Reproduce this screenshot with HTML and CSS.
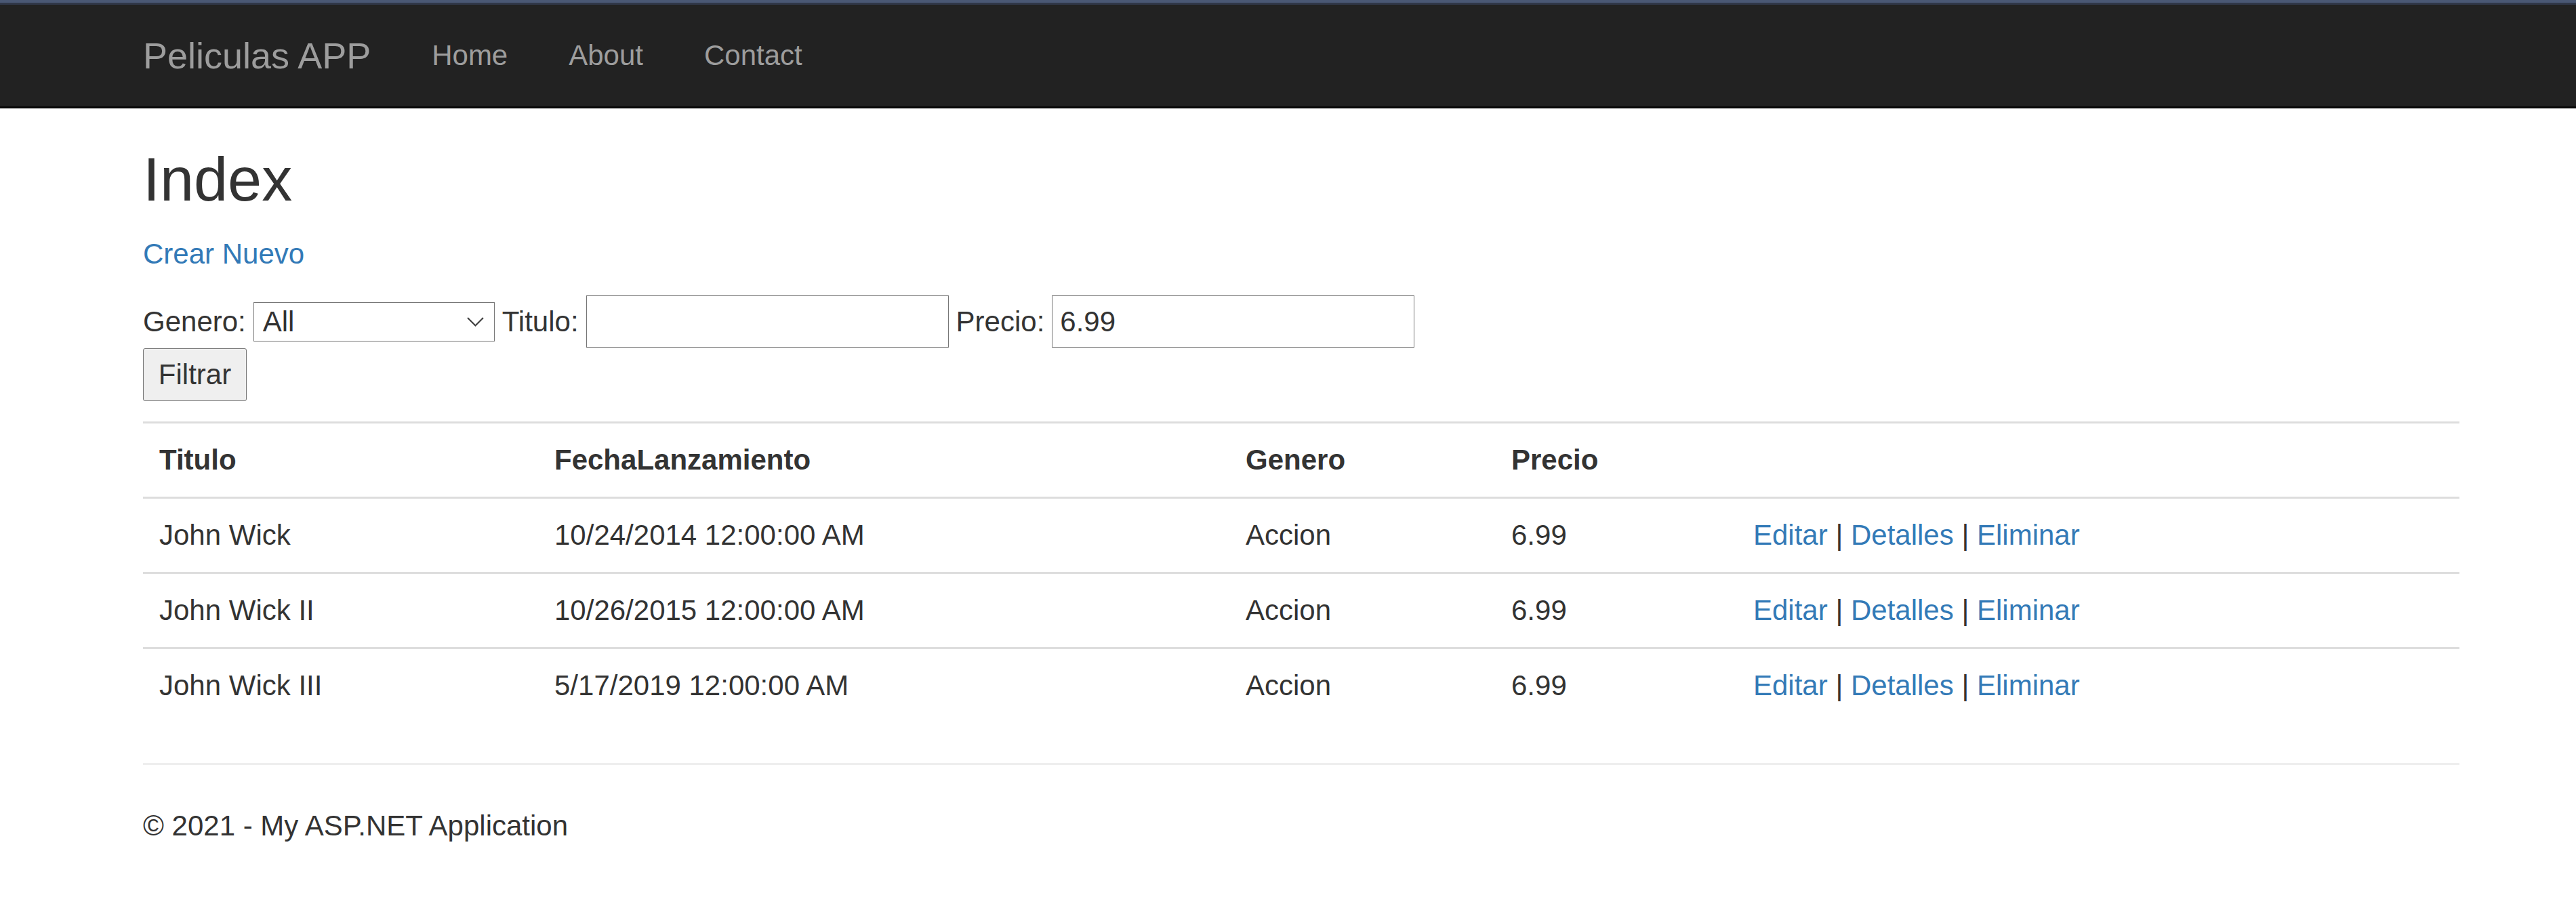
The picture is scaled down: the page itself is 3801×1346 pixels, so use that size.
FILE: index.html
```html
<!DOCTYPE html>
<html lang="es">
<head>
<meta charset="utf-8">
<title>Index - Peliculas APP</title>
<link rel="stylesheet" href="styles.css">
</head>
<body>
<div class="topstrip"></div>
<nav class="navbar">
  <div class="container navrow">
    <a class="brand" href="#">Peliculas APP</a>
    <ul class="navlinks">
      <li><a href="#">Home</a></li>
      <li><a href="#">About</a></li>
      <li><a href="#">Contact</a></li>
    </ul>
  </div>
</nav>
<main class="container body-content">
  <h2 class="title">Index</h2>
  <p class="create"><a href="#">Crear Nuevo</a></p>
  <form class="filter">
    <div class="filter-row">
      <label class="lbl">Genero:</label>
      <span class="select-wrap">
        <select class="select"><option>All</option></select>
        <svg class="chev" viewBox="0 0 25 14" width="25" height="14" aria-hidden="true"><path d="M1 1 L12.5 12.5 L24 1" fill="none" stroke="#3a3a3a" stroke-width="2"/></svg>
      </span>
      <label class="lbl">Titulo:</label>
      <input class="text" type="text" value="">
      <label class="lbl">Precio:</label>
      <input class="text" type="text" value="6.99">
    </div>
    <button class="btn" type="button">Filtrar</button>
  </form>
  <table class="table">
    <colgroup>
      <col class="c1"><col class="c2"><col class="c3"><col class="c4"><col class="c5">
    </colgroup>
    <tr><th>Titulo</th><th>FechaLanzamiento</th><th>Genero</th><th>Precio</th><th></th></tr>
    <tr><td>John Wick</td><td>10/24/2014 12:00:00 AM</td><td>Accion</td><td>6.99</td><td><a href="#">Editar</a> | <a href="#">Detalles</a> | <a href="#">Eliminar</a></td></tr>
    <tr><td>John Wick II</td><td>10/26/2015 12:00:00 AM</td><td>Accion</td><td>6.99</td><td><a href="#">Editar</a> | <a href="#">Detalles</a> | <a href="#">Eliminar</a></td></tr>
    <tr><td>John Wick III</td><td>5/17/2019 12:00:00 AM</td><td>Accion</td><td>6.99</td><td><a href="#">Editar</a> | <a href="#">Detalles</a> | <a href="#">Eliminar</a></td></tr>
  </table>
  <hr class="rule">
  <footer class="footer"><p>&copy; 2021 - My ASP.NET Application</p></footer>
</main>
</body>
</html>
```
FILE: styles.css
```css
* { box-sizing: border-box; }
html, body { margin: 0; padding: 0; background: #fff; }
body {
  font-family: "Liberation Sans", Arial, Helvetica, sans-serif;
  font-size: 42px;
  line-height: 60px;
  color: #333;
}
a { color: #337ab7; text-decoration: none; }

.topstrip {
  height: 7px;
  background: #303748;
  border-top: 4px solid #4a5874;
}
.navbar {
  height: 153px;
  background: #222;
  border-bottom: 3px solid #080808;
}
.container {
  width: 3418px;
  margin-left: 211px;
}
.navrow {
  display: flex;
  align-items: flex-start;
}
.brand {
  color: #9d9d9d;
  font-size: 54px;
  line-height: 60px;
  padding: 45px 45px 45px 0;
}
.navlinks {
  display: flex;
  list-style: none;
  margin: 0;
  padding: 0;
}
.navlinks a {
  display: block;
  color: #9d9d9d;
  padding: 45px;
  line-height: 60px;
}

.title {
  font-size: 90px;
  line-height: 99px;
  font-weight: 500;
  margin: 56px 0 30px;
}
.create { margin: 0 0 30px; }

.filter { margin: 0; padding-top: 1px; }
.filter-row {
  display: flex;
  align-items: center;
  gap: 11px;
  height: 77px;
}
.lbl { white-space: nowrap; }
.select-wrap { position: relative; display: block; height: 58px; }
.select {
  -webkit-appearance: none;
  appearance: none;
  display: block;
  width: 356px;
  height: 58px;
  margin: 0;
  border: 1px solid #767676;
  border-radius: 0;
  background: #fff;
  color: #333;
  font: inherit;
  font-size: 42px;
  line-height: 56px;
  padding: 0 0 0 13px;
}
.chev {
  position: absolute;
  left: 315px;
  top: 22px;
  pointer-events: none;
}
.text {
  display: block;
  width: 535px;
  height: 77px;
  margin: 0;
  border: 1px solid #767676;
  border-radius: 0;
  background: #fff;
  color: #333;
  font: inherit;
  font-size: 42px;
  padding: 0 0 0 11px;
}
.btn {
  display: block;
  margin: 1px 0 0;
  width: 153px;
  height: 78px;
  border: 1px solid #767676;
  border-radius: 3px;
  background: #efefef;
  color: #333;
  font: inherit;
  font-size: 42px;
  line-height: 60px;
  padding: 0;
}

.table {
  width: 3418px;
  margin: 30px 0 60px;
  border-collapse: collapse;
  table-layout: fixed;
}
.c1 { width: 583px; }
.c2 { width: 1020px; }
.c3 { width: 392px; }
.c4 { width: 357px; }
.c5 { width: 1066px; }
.table th, .table td {
  text-align: left;
  vertical-align: top;
  padding: 24px;
  line-height: 60px;
  border-top: 3px solid #ddd;
  white-space: nowrap;
}
.table th { font-weight: bold; }

.rule {
  margin: 0 0 60px;
  border: 0;
  border-top: 3px solid #eee;
  height: 0;
}
.footer p { margin: 0 0 30px; }
```
